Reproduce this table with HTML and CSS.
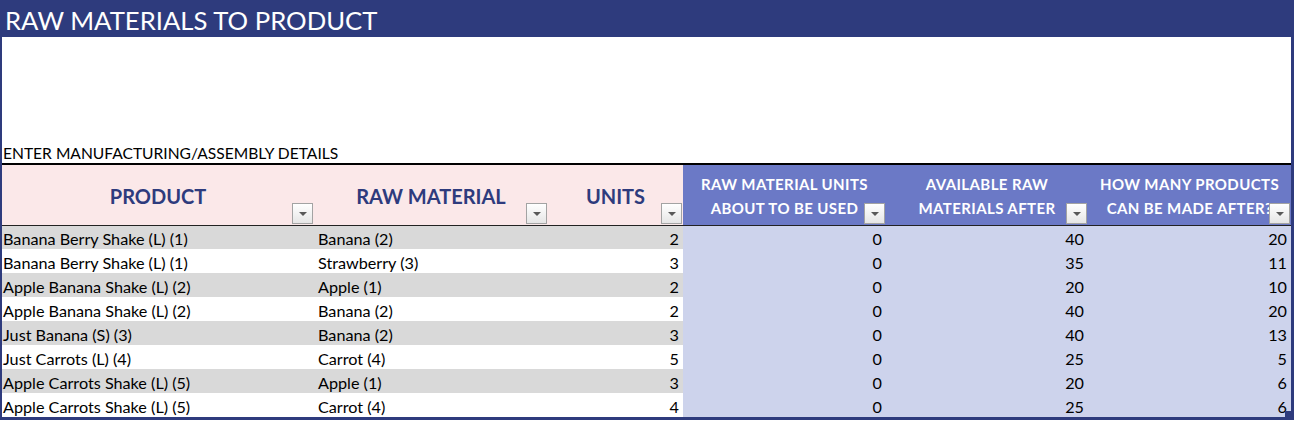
FILE: index.html
```html
<!DOCTYPE html>
<html>
<head>
<meta charset="utf-8">
<link rel="stylesheet" href="styles.css">
</head>
<body>
<div class="sheet">
  <div class="title">RAW MATERIALS TO PRODUCT</div>
  <div class="panel">
    <div class="caption">ENTER MANUFACTURING/ASSEMBLY DETAILS</div>
    <div class="grid">
      <div class="hd pink"><span class="hd-text big">PRODUCT</span><span class="dd"></span></div>
      <div class="hd pink"><span class="hd-text big">RAW MATERIAL</span><span class="dd"></span></div>
      <div class="hd pink"><span class="hd-text big">UNITS</span><span class="dd"></span></div>
      <div class="hd blue"><span class="hd-text small">RAW MATERIAL UNITS<br>ABOUT TO BE USED</span><span class="dd"></span></div>
      <div class="hd blue"><span class="hd-text small">AVAILABLE RAW<br>MATERIALS AFTER</span><span class="dd"></span></div>
      <div class="hd blue"><span class="hd-text small">HOW MANY PRODUCTS<br>CAN BE MADE AFTER?</span><span class="dd"></span></div>

      <div class="c c1 g">Banana Berry Shake (L) (1)</div><div class="c c2 g">Banana (2)</div><div class="c num g">2</div><div class="c num b">0</div><div class="c num b">40</div><div class="c num b">20</div>
      <div class="c c1">Banana Berry Shake (L) (1)</div><div class="c c2">Strawberry (3)</div><div class="c num">3</div><div class="c num b">0</div><div class="c num b">35</div><div class="c num b">11</div>
      <div class="c c1 g">Apple Banana Shake (L) (2)</div><div class="c c2 g">Apple (1)</div><div class="c num g">2</div><div class="c num b">0</div><div class="c num b">20</div><div class="c num b">10</div>
      <div class="c c1">Apple Banana Shake (L) (2)</div><div class="c c2">Banana (2)</div><div class="c num">2</div><div class="c num b">0</div><div class="c num b">40</div><div class="c num b">20</div>
      <div class="c c1 g">Just Banana (S) (3)</div><div class="c c2 g">Banana (2)</div><div class="c num g">3</div><div class="c num b">0</div><div class="c num b">40</div><div class="c num b">13</div>
      <div class="c c1">Just Carrots (L) (4)</div><div class="c c2">Carrot (4)</div><div class="c num">5</div><div class="c num b">0</div><div class="c num b">25</div><div class="c num b">5</div>
      <div class="c c1 g">Apple Carrots Shake (L) (5)</div><div class="c c2 g">Apple (1)</div><div class="c num g">3</div><div class="c num b">0</div><div class="c num b">20</div><div class="c num b">6</div>
      <div class="c c1">Apple Carrots Shake (L) (5)</div><div class="c c2">Carrot (4)</div><div class="c num">4</div><div class="c num b">0</div><div class="c num b">25</div><div class="c num b last">6<span class="handle"></span></div>
    </div>
  </div>
</div>
</body>
</html>
```
FILE: styles.css
```css
html, body {
  margin: 0;
  padding: 0;
  background: #ffffff;
}
body {
  font-family: "Lato", "Open Sans", sans-serif;
  color: #000;
}
.sheet {
  width: 1294px;
}
.title {
  height: 37px;
  background: #2e3b7d;
  color: #ffffff;
  font-size: 25.7px;
  line-height: 40px;
  padding-left: 5px;
  box-sizing: border-box;
  white-space: nowrap;
}
.panel {
  border-left: 2px solid #2e3b7d;
  border-right: 3px solid #2e3b7d;
  border-bottom: 3px solid #2e3b7d;
  padding-top: 106px;
}
.caption {
  height: 20px;
  line-height: 20px;
  font-size: 15.6px;
  padding-left: 1px;
  white-space: nowrap;
}
.grid {
  display: grid;
  grid-template-columns: 312px 234px 135px 203px 202px 203px;
  grid-template-rows: 60px repeat(8, 24px);
  border-top: 2px solid #000;
}
.hd {
  position: relative;
  display: flex;
  align-items: center;
  justify-content: center;
  border-bottom: 1px solid #222;
  box-sizing: border-box;
  height: 61px;
}
.pink {
  background: #fbe8e9;
}
.blue {
  background: #6b79c6;
}
.hd-text {
  font-weight: 700;
  text-align: center;
  white-space: nowrap;
}
.big {
  font-size: 20px;
  color: #2e3b7d;
  padding-top: 2px;
}
.small {
  font-size: 15px;
  letter-spacing: 0.4px;
  line-height: 24px;
  color: #ffffff;
  padding-top: 1px;
}
.dd {
  position: absolute;
  right: 1px;
  bottom: 1px;
  width: 21px;
  height: 21px;
  box-sizing: border-box;
  border: 1px solid #a3a3a3;
  background: linear-gradient(#ffffff, #e6e6e6);
}
.dd::after {
  content: "";
  position: absolute;
  left: 6px;
  top: 8px;
  border-left: 4px solid transparent;
  border-right: 4px solid transparent;
  border-top: 4px solid #595959;
}
.c {
  font-size: 16.2px;
  line-height: 27px;
  height: 24px;
  white-space: nowrap;
  background: #ffffff;
}
.c.g {
  background: #d9d9d9;
}
.c.b {
  background: #cdd3ec;
}
.c1 {
  padding-left: 1px;
}
.c2 {
  padding-left: 4px;
}
.num {
  text-align: right;
  padding-right: 4px;
}
.last {
  position: relative;
}
.handle {
  position: absolute;
  right: 0;
  bottom: 0;
  width: 6px;
  height: 6px;
  background: #2e3b7d;
}
```
